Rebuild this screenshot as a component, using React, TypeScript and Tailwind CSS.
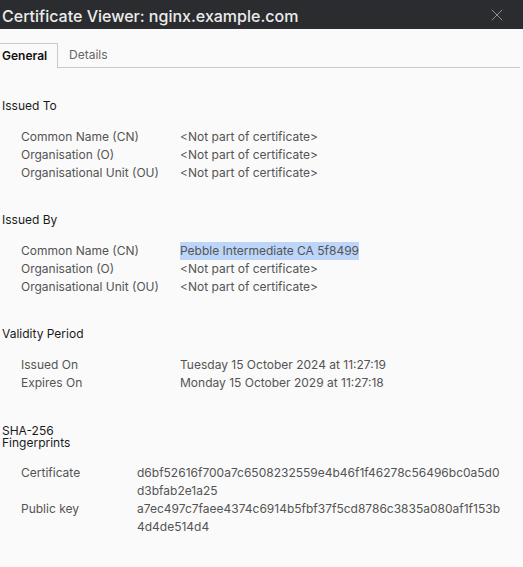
import { X } from 'lucide-react'

const font = { fontFamily: 'Inter, "Noto Sans", sans-serif' }

type Row = { label: string; value: string; selected?: boolean }

const Section = ({ title, rows }: { title: string; rows: Row[] }) => (
  <div className="mt-[29px]">
    <h3 className="pl-[2px] text-[12px] leading-[18px] text-[#1a1a1a]">{title}</h3>
    <div className="mt-[13px] pl-[21px]">
      {rows.map((r) => (
        <div key={r.label} className="flex text-[12px] leading-[18px] text-[#545454]">
          <div className="w-[159px] shrink-0">{r.label}</div>
          <div>
            <span className={r.selected ? 'bg-[#bcd5f9] inline-block' : ''}>{r.value}</span>
          </div>
        </div>
      ))}
    </div>
  </div>
)

const Fingerprint = ({ label, lines }: { label: string; lines: string[] }) => (
  <div className="flex text-[12px] leading-[18px] text-[#545454]">
    <div className="w-[116px] shrink-0">{label}</div>
    <div>
      {lines.map((l) => (
        <div key={l}>{l}</div>
      ))}
    </div>
  </div>
)

export default function App() {
  return (
    <div className="min-h-screen bg-[#fafafa]" style={font}>
      <div className="h-[29px] bg-[#2b2c30] flex items-center justify-between pl-[2px] pr-[16px]">
        <h1 className="text-[16px] font-medium text-[#ececec] leading-[20px] mt-[3px]">
          Certificate Viewer: nginx.example.com
        </h1>
        <X size={20} strokeWidth={1.2} className="text-[#8e8e90]" />
      </div>

      <div className="mt-[14px] flex h-[25px] mr-[3px]">
        <div className="w-[58px] border-t border-r border-[#c9c9c9] pl-[2px] flex items-center text-[12px] font-semibold text-[#111]">
          General
        </div>
        <div className="flex-1 border-b border-[#c9c9c9] pl-[11px] flex items-center text-[12px] text-[#666]">
          Details
        </div>
      </div>

      <Section
        title="Issued To"
        rows={[
          { label: 'Common Name (CN)', value: '<Not part of certificate>' },
          { label: 'Organisation (O)', value: '<Not part of certificate>' },
          { label: 'Organisational Unit (OU)', value: '<Not part of certificate>' },
        ]}
      />
      <Section
        title="Issued By"
        rows={[
          { label: 'Common Name (CN)', value: 'Pebble Intermediate CA 5f8499', selected: true },
          { label: 'Organisation (O)', value: '<Not part of certificate>' },
          { label: 'Organisational Unit (OU)', value: '<Not part of certificate>' },
        ]}
      />
      <Section
        title="Validity Period"
        rows={[
          { label: 'Issued On', value: 'Tuesday 15 October 2024 at 11:27:19' },
          { label: 'Expires On', value: 'Monday 15 October 2029 at 11:27:18' },
        ]}
      />

      <div className="mt-[33px]">
        <h3 className="pl-[2px] text-[12px] leading-[12px] text-[#1a1a1a] w-[90px]">
          SHA-256
          <br />
          Fingerprints
        </h3>
        <div className="mt-[15px] pl-[21px]">
          <Fingerprint
            label="Certificate"
            lines={['d6bf52616f700a7c6508232559e4b46f1f46278c56496bc0a5d0', 'd3bfab2e1a25']}
          />
          <Fingerprint
            label="Public key"
            lines={['a7ec497c7faee4374c6914b5fbf37f5cd8786c3835a080af1f153b', '4d4de514d4']}
          />
        </div>
      </div>
    </div>
  )
}
